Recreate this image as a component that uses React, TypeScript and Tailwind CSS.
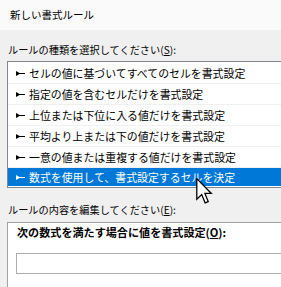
const font = "font-['Yu_Gothic_UI','Noto_Sans_CJK_JP',sans-serif]";

const rules = [
  "セルの値に基づいてすべてのセルを書式設定",
  "指定の値を含むセルだけを書式設定",
  "上位または下位に入る値だけを書式設定",
  "平均より上または下の値だけを書式設定",
  "一意の値または重複する値だけを書式設定",
  "数式を使用して、書式設定するセルを決定",
];

function Arrow() {
  return (
    <svg width="9" height="5" viewBox="0 0 9 5" className="shrink-0" aria-hidden="true">
      <path d="M0 0 L3.5 2 L9 2 L9 3 L3.5 3 L0 5 Z" fill="currentColor" />
    </svg>
  );
}

function Cursor() {
  return (
    <svg width="17" height="27" viewBox="0 0 13 21" className="absolute left-[196px] top-[178px]" aria-hidden="true">
      <path
        d="M0.5 0.5 L0.5 16.5 L4.3 12.9 L7 19.3 L9.4 18.3 L6.8 12 L11.8 12 Z"
        fill="#fff"
        stroke="#000"
        strokeWidth="1"
        strokeLinejoin="miter"
      />
    </svg>
  );
}

export default function App() {
  return (
    <div className={`relative w-[281px] h-[287px] overflow-hidden bg-[#f0f0f0] text-black ${font}`}>
      {/* Title bar */}
      <div className="h-[30px] bg-[#fafafa] flex items-center pl-[10px] text-[10.5px]">
        新しい書式ルール
      </div>

      <div className="pl-[7px]">
        <div className="h-[31px] flex items-center pl-[1px] pt-[9px] text-[10.2px]">
          ルールの種類を選択してください(<span className="underline">S</span>):
        </div>

        {/* Rule type list */}
        <div className="w-[300px] h-[127px] border border-[#828790] bg-white pt-[1px] text-[10.9px]">
          {rules.map((r, i) => {
            const selected = i === rules.length - 1;
            return (
              <div
                key={r}
                className={
                  selected
                    ? "h-[18px] flex items-center gap-[4px] pl-[8px] bg-[#0078d7] text-white"
                    : "h-[21px] flex items-center gap-[4px] pl-[8px] border-b border-[#f0f0f0]"
                }
              >
                <Arrow />
                <span>{r}</span>
              </div>
            );
          })}
        </div>

        <div className="h-[34px] flex items-center pl-[1px] pt-[10px] text-[10.2px]">
          ルールの内容を編集してください(<span className="underline">E</span>):
        </div>

        {/* Rule description panel */}
        <div className="w-[300px] h-[80px] border border-[#a0a0a0] bg-white pl-[8px]">
          <div className="h-[18px] flex items-center pl-[1px] text-[11.1px] font-bold">
            次の数式を満たす場合に値を書式設定(<span className="underline">O</span>):
          </div>
          <div className="mt-[12px] h-[21px] border border-[#adadad] bg-white" />
        </div>
      </div>

      <Cursor />
    </div>
  );
}
